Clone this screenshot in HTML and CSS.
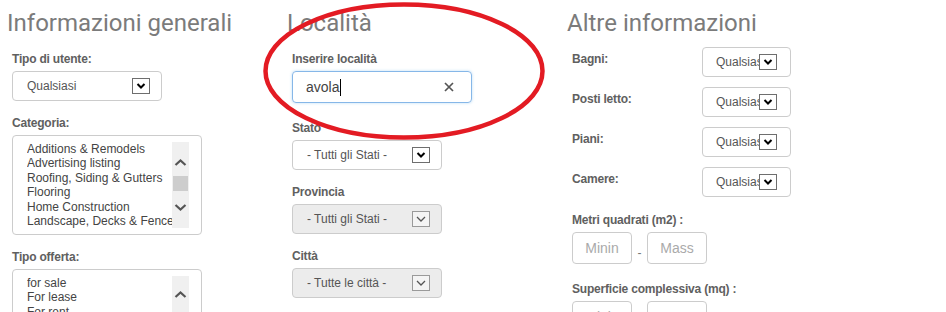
FILE: index.html
```html
<!DOCTYPE html>
<html lang="it">

<head>
    <meta charset="UTF-8">
    <meta name="viewport" content="width=device-width, initial-scale=1.0">
    <title>Ricerca immobili</title>
    <link rel="stylesheet" href="styles.css">
</head>

<body>
    <div class="page">
        <!-- Colonna 1: Informazioni generali -->
        <section class="col">
            <h2>Informazioni generali</h2>

            <div class="field">
                <label>Tipo di utente:</label>
                <div class="select">
                    <span class="value">Qualsiasi</span>
                    <span class="arrow"><svg viewBox="0 0 16 14"><path d="M4.5 5 L8 8.5 L11.5 5"/></svg></span>
                </div>
            </div>

            <div class="field">
                <label>Categoria:</label>
                <div class="listbox">
                    <ul>
                        <li>Additions &amp; Remodels</li>
                        <li>Advertising listing</li>
                        <li>Roofing, Siding &amp; Gutters</li>
                        <li>Flooring</li>
                        <li>Home Construction</li>
                        <li>Landscape, Decks &amp; Fences</li>
                    </ul>
                    <div class="scrollbar">
                        <svg class="up" viewBox="0 0 17 12"><path d="M3.5 8 L8.5 3.5 L13.5 8"/></svg>
                        <div class="thumb"></div>
                        <svg class="down" viewBox="0 0 17 12"><path d="M3.5 4 L8.5 8.5 L13.5 4"/></svg>
                    </div>
                </div>
            </div>

            <div class="field">
                <label>Tipo offerta:</label>
                <div class="listbox">
                    <ul>
                        <li>for sale</li>
                        <li>For lease</li>
                        <li>For rent</li>
                        <li>Sold</li>
                        <li>Rented</li>
                    </ul>
                    <div class="scrollbar short">
                        <svg class="up" viewBox="0 0 17 12"><path d="M3.5 8 L8.5 3.5 L13.5 8"/></svg>
                    </div>
                </div>
            </div>
        </section>

        <!-- Colonna 2: Località -->
        <section class="col">
            <h2>Località</h2>

            <div class="field">
                <label>Inserire località</label>
                <div class="search">
                    <span class="typed">avola</span><span class="caret"></span>
                    <svg class="clear" viewBox="0 0 10 10"><path d="M1 1 L9 9 M9 1 L1 9"/></svg>
                </div>
            </div>

            <div class="field">
                <label>Stato</label>
                <div class="select">
                    <span class="value">- Tutti gli Stati -</span>
                    <span class="arrow"><svg viewBox="0 0 16 14"><path d="M4.5 5 L8 8.5 L11.5 5"/></svg></span>
                </div>
            </div>

            <div class="field">
                <label>Provincia</label>
                <div class="select disabled">
                    <span class="value">- Tutti gli Stati -</span>
                    <span class="arrow"><svg viewBox="0 0 16 14"><path d="M4 5 L8 9 L12 5"/></svg></span>
                </div>
            </div>

            <div class="field">
                <label>Città</label>
                <div class="select disabled">
                    <span class="value">- Tutte le città -</span>
                    <span class="arrow"><svg viewBox="0 0 16 14"><path d="M4 5 L8 9 L12 5"/></svg></span>
                </div>
            </div>
        </section>

        <!-- Colonna 3: Altre informazioni -->
        <section class="col last">
            <h2>Altre informazioni</h2>

            <div class="pair">
                <label>Bagni:</label>
                <div class="select small">
                    <span class="value">Qualsiasi</span>
                    <span class="arrow"><svg viewBox="0 0 16 14"><path d="M4.5 5 L8 8.5 L11.5 5"/></svg></span>
                </div>
            </div>
            <div class="pair">
                <label>Posti letto:</label>
                <div class="select small">
                    <span class="value">Qualsiasi</span>
                    <span class="arrow"><svg viewBox="0 0 16 14"><path d="M4.5 5 L8 8.5 L11.5 5"/></svg></span>
                </div>
            </div>
            <div class="pair">
                <label>Piani:</label>
                <div class="select small">
                    <span class="value">Qualsiasi</span>
                    <span class="arrow"><svg viewBox="0 0 16 14"><path d="M4.5 5 L8 8.5 L11.5 5"/></svg></span>
                </div>
            </div>
            <div class="pair">
                <label>Camere:</label>
                <div class="select small">
                    <span class="value">Qualsiasi</span>
                    <span class="arrow"><svg viewBox="0 0 16 14"><path d="M4.5 5 L8 8.5 L11.5 5"/></svg></span>
                </div>
            </div>

            <div class="field range-field">
                <label>Metri quadrati (m2) :</label>
                <div class="range">
                    <span class="box placeholder">Minin</span>
                    <span class="dash">-</span>
                    <span class="box placeholder">Mass</span>
                </div>
            </div>

            <div class="field range-field">
                <label>Superficie complessiva (mq) :</label>
                <div class="range">
                    <span class="box placeholder">Minin</span>
                    <span class="dash">-</span>
                    <span class="box placeholder">Mass</span>
                </div>
            </div>
        </section>

        <!-- Evidenziazione a mano -->
        <svg class="mark" viewBox="0 0 284 142">
            <ellipse cx="141" cy="70" rx="138.5" ry="66.5"/>
        </svg>
    </div>
</body>

</html>
```

FILE: styles.css
```css
body {
    margin: 0;
    padding: 0;
    background-color: #fff;
    font-family: "Liberation Sans", Arial, sans-serif;
    overflow: hidden;
}

.page {
    position: relative;
    display: flex;
    height: 312px;
    overflow: hidden;
}

.col {
    width: 273px;
    padding: 8px 0 0 7px;
    flex-shrink: 0;
}

.col.last {
    width: auto;
    flex: 1;
}

h2 {
    margin: 0 0 14px 0;
    font-family: Roboto, sans-serif;
    font-size: 24px;
    line-height: 30px;
    font-weight: 400;
    color: #7b7b7b;
    white-space: nowrap;
}

label {
    display: block;
    font-size: 12px;
    line-height: 15px;
    font-weight: bold;
    letter-spacing: -0.2px;
    color: #606060;
}

.field {
    margin-left: 5px;
    margin-bottom: 15px;
}

.field label {
    margin-bottom: 4px;
}

/* Select finti */
.select {
    display: flex;
    align-items: center;
    width: 150px;
    height: 30px;
    box-sizing: border-box;
    border: 1px solid #ccc;
    border-radius: 4px;
    padding: 0 11px 0 14px;
    background-color: #fff;
    font-size: 12px;
    color: #555;
}

.select .value {
    flex: 1;
    white-space: nowrap;
    overflow: hidden;
}

.select .arrow {
    width: 18px;
    height: 16px;
    box-sizing: border-box;
    border: 1px solid #6e6e6e;
    background-color: #fff;
    display: flex;
    align-items: center;
    justify-content: center;
    flex-shrink: 0;
}

.select .arrow svg {
    width: 16px;
    height: 14px;
    fill: none;
    stroke: #000;
    stroke-width: 2;
}

.select.disabled {
    background-color: #ececec;
}

.select.disabled .arrow {
    border-color: #9a9a9a;
    background-color: #f4f4f4;
}

.select.disabled .arrow svg {
    stroke: #555;
    stroke-width: 1.3;
}

.select.small {
    width: 89px;
    padding: 0 12px 0 13px;
}

.select.small .value {
    flex: none;
    width: 43px;
    overflow: hidden;
}

/* Listbox con scrollbar */
.listbox {
    display: flex;
    width: 190px;
    height: 100px;
    box-sizing: border-box;
    border: 1px solid #ccc;
    border-radius: 4px;
    padding: 6px 12px 6px 14px;
    background-color: #fff;
}

.listbox ul {
    list-style: none;
    margin: 0;
    padding: 0;
    flex: 1;
    overflow: hidden;
    font-size: 12px;
    line-height: 14.4px;
    color: #444;
    white-space: nowrap;
}

.scrollbar {
    width: 17px;
    background-color: #f0f0f0;
    display: flex;
    flex-direction: column;
    align-items: center;
}

.scrollbar svg {
    width: 17px;
    height: 12px;
    fill: none;
    stroke: #555;
    stroke-width: 2.2;
}

.scrollbar .up {
    margin-top: 15px;
}

.scrollbar .thumb {
    width: 15px;
    height: 15px;
    margin-top: 7px;
    background-color: #cdcdcd;
}

.scrollbar .down {
    margin-top: 10px;
}

.scrollbar.short .up {
    margin-top: 13px;
}

/* Campo di ricerca */
.search {
    display: flex;
    align-items: center;
    width: 180px;
    height: 32px;
    box-sizing: border-box;
    border: 1px solid #86b7e8;
    border-radius: 4px;
    box-shadow: 0 0 3px rgba(102, 175, 233, 0.45);
    padding: 0 17px 0 13px;
    margin-bottom: 18px;
    font-size: 14px;
    color: #444;
}

.caret {
    width: 1px;
    height: 17px;
    background-color: #000;
    margin-left: 1px;
}

.clear {
    margin-left: auto;
    width: 10px;
    height: 10px;
    fill: none;
    stroke: #555;
    stroke-width: 1.7;
}

/* Colonna 3 */
.pair {
    display: flex;
    margin-left: 5px;
    margin-top: -5px;
    margin-bottom: 15px;
}

.pair label {
    width: 130px;
    padding-top: 5px;
}

.range-field {
    margin-top: 16px;
    margin-bottom: 18px;
}

.range-field label {
    margin-bottom: 4px;
}

.range {
    display: flex;
    align-items: center;
}

.box {
    width: 60px;
    height: 32px;
    box-sizing: border-box;
    border: 1px solid #ccc;
    border-radius: 4px;
    display: flex;
    align-items: center;
    justify-content: center;
    font-size: 14px;
}

.placeholder {
    color: #aaa;
}

.dash {
    width: 15px;
    text-align: center;
    font-size: 12px;
    color: #777;
    padding-top: 10px;
}

/* Cerchio rosso */
.mark {
    position: absolute;
    left: 263px;
    top: 1px;
    width: 284px;
    height: 142px;
    fill: none;
    stroke: #e31b23;
    stroke-width: 4.5;
}
```
